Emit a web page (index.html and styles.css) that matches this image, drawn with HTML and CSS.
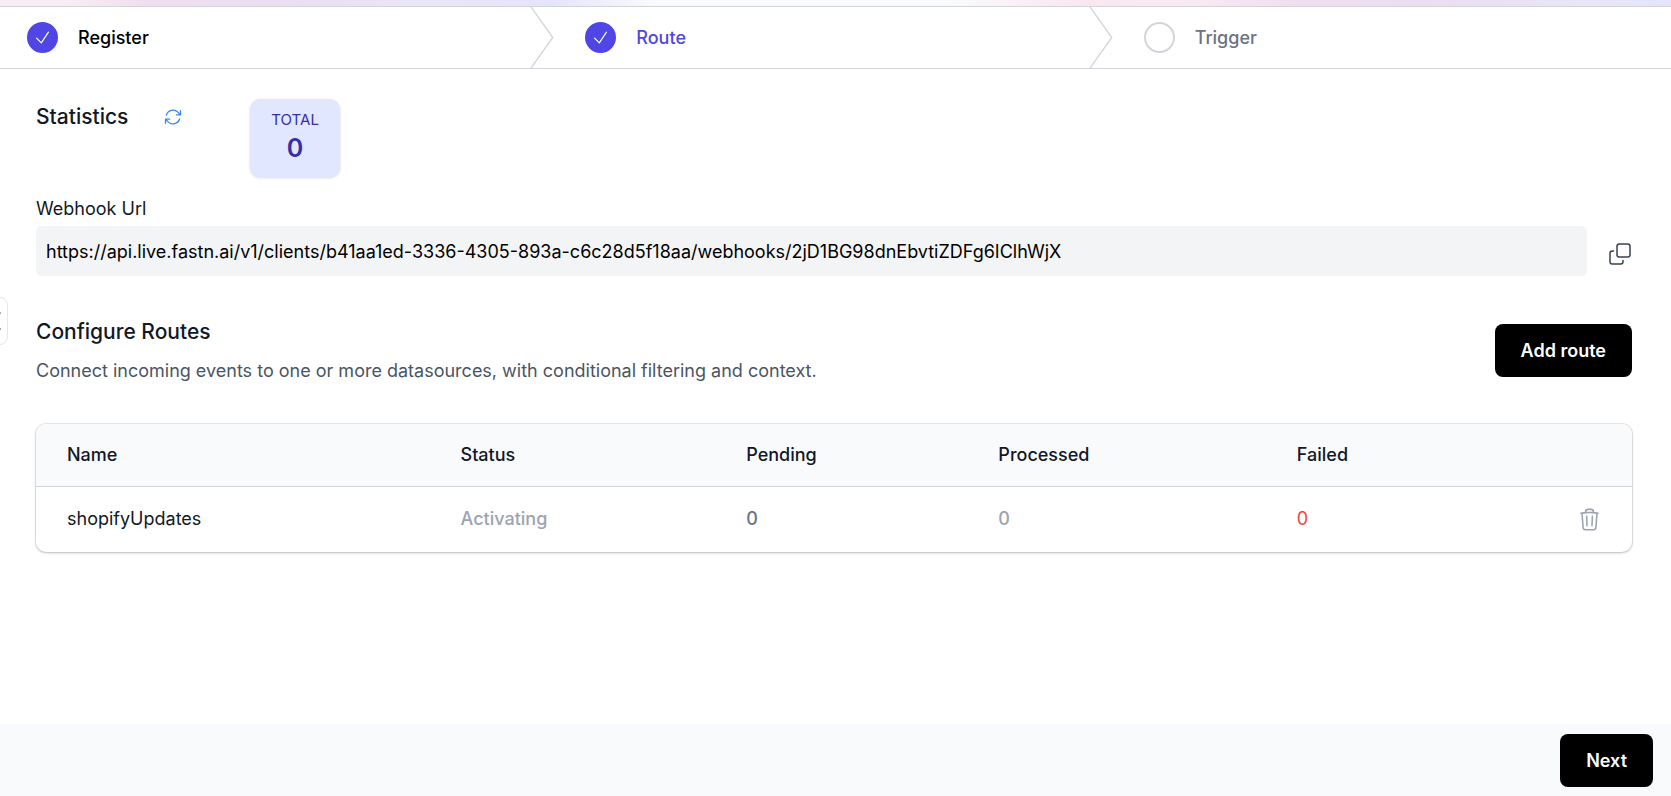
FILE: index.html
```html
<!DOCTYPE html>
<html lang="en">
<head>
<meta charset="utf-8">
<meta name="viewport" content="width=device-width, initial-scale=1">
<title>Configure Routes</title>
<link rel="stylesheet" href="styles.css">
</head>
<body>
<div class="page">
  <div class="glow"></div>
  <nav class="steps" aria-label="Progress">
    <ol class="steps-list">
      <li class="step">
        <span class="step-mark done"><svg viewBox="0 0 24 24" width="19" height="19"><path d="M4.5 12.75l6 6 9-13.5"/></svg></span>
        <span class="step-name">Register</span>
        <svg class="step-sep" viewBox="0 0 22 80" preserveAspectRatio="none"><path d="M0 -2L20 40L0 82"/></svg>
      </li>
      <li class="step current" aria-current="step">
        <span class="step-mark done"><svg viewBox="0 0 24 24" width="19" height="19"><path d="M4.5 12.75l6 6 9-13.5"/></svg></span>
        <span class="step-name">Route</span>
        <svg class="step-sep" viewBox="0 0 22 80" preserveAspectRatio="none"><path d="M0 -2L20 40L0 82"/></svg>
      </li>
      <li class="step upcoming">
        <span class="step-mark"></span>
        <span class="step-name">Trigger</span>
      </li>
    </ol>
  </nav>
  <button class="side-tab" type="button" aria-label="Expand sidebar"><svg viewBox="0 0 10 18" width="10" height="18"><path d="M9 1L1 9l8 8"/></svg></button>
  <main class="content">
    <section class="stats">
      <h2 class="heading">Statistics</h2>
      <button class="icon-button refresh" type="button" aria-label="Refresh"><svg viewBox="0 0 24 24" width="20" height="20"><path d="M16.023 9.348h4.992v-.001M2.985 19.644v-4.992m0 0h4.992m-4.993 0l3.181 3.183a8.25 8.25 0 0013.803-3.7M4.031 9.865a8.25 8.25 0 0113.803-3.7l3.181 3.182m0-4.991v4.99"/></svg></button>
      <div class="total">
        <span class="total-label">TOTAL</span>
        <span class="total-value">0</span>
      </div>
    </section>
    <label class="url-label" for="webhook-url">Webhook Url</label>
    <div class="url-row">
      <input class="url-input" id="webhook-url" type="text" readonly value="https://api.live.fastn.ai/v1/clients/b41aa1ed-3336-4305-893a-c6c28d5f18aa/webhooks/2jD1BG98dnEbvtiZDFg6IClhWjX">
      <button class="icon-button copy" type="button" aria-label="Copy webhook url"><svg viewBox="0 0 24 24" width="24" height="24"><rect x="9" y="2" width="13" height="13" rx="2.25"/><path d="M5.5 9H4.25A2.25 2.25 0 002 11.25V19.75A2.25 2.25 0 004.25 22H12.75A2.25 2.25 0 0015 19.75V18.5"/></svg></button>
    </div>
    <section class="routes-head">
      <div>
        <h2 class="heading">Configure Routes</h2>
        <p class="lead">Connect incoming events to one or more datasources, with conditional filtering and context.</p>
      </div>
      <button class="primary" type="button">Add route</button>
    </section>
    <div class="table-card">
      <table class="routes">
        <thead>
          <tr><th class="col-name" scope="col">Name</th><th class="col-status" scope="col">Status</th><th class="col-pending" scope="col">Pending</th><th class="col-processed" scope="col">Processed</th><th class="col-failed" scope="col">Failed</th><td class="col-action"></td></tr>
        </thead>
        <tbody>
          <tr>
            <td class="col-name route-name">shopifyUpdates</td>
            <td class="muted strong">Activating</td>
            <td class="count">0</td>
            <td class="muted strong">0</td>
            <td class="failed">0</td>
            <td class="col-action"><button class="icon-button trash" type="button" aria-label="Delete route"><svg viewBox="0 0 24 24" width="25" height="25"><path d="M14.74 9l-.346 9m-4.788 0L9.26 9m9.968-3.21c.342.052.682.107 1.022.166m-1.022-.165L18.16 19.673a2.25 2.25 0 01-2.244 2.077H8.084a2.25 2.25 0 01-2.244-2.077L4.772 5.79m14.456 0a48.108 48.108 0 00-3.478-.397m-12 .562c.34-.059.68-.114 1.022-.165m0 0a48.11 48.11 0 013.478-.397m7.5 0v-.916c0-1.18-.91-2.164-2.09-2.201a51.964 51.964 0 00-3.32 0c-1.18.037-2.09 1.022-2.09 2.201v.916m7.5 0a48.667 48.667 0 00-7.5 0"/></svg></button></td>
          </tr>
        </tbody>
      </table>
    </div>
  </main>
  <footer class="footer"><button class="primary" type="button">Next</button></footer>
</div>
</body>
</html>
```
FILE: styles.css
```css
*, *::before, *::after { box-sizing: border-box; }
body {
  margin: 0;
  background: #fff;
  color: #111827;
  font-family: Inter, "Liberation Sans", sans-serif;
  font-size: 18px;
  line-height: 24px;
}
h2, p, ol { margin: 0; padding: 0; font-weight: inherit; }
button, input { font: inherit; color: inherit; }
svg { display: block; fill: none; stroke: currentColor; stroke-linecap: round; stroke-linejoin: round; stroke-width: 1.5; }

.page { position: relative; display: flex; flex-direction: column; min-height: 100vh; overflow: hidden; }
.glow {
  height: 6px;
  background: linear-gradient(90deg, #f8edf3 0%, #f8edf3 4%, #f0def0 9%, #eadff3 19%, #eae6f7 25%, #e6e4fa 33%, #f8fafc 39%, #f9fafb 57%, #fae6ef 65%, #f8eaf2 71%, #f0def0 78%, #eadff3 88%, #e8e6f7 95%, #e4e4fa 100%);
}

.steps { border: solid #d1d5db; border-width: 1px 0; margin: 0 -2px; }
.steps-list { display: grid; grid-template-columns: repeat(3, 1fr); list-style: none; }
.step { position: relative; display: flex; align-items: center; gap: 20px; height: 61px; padding-left: 29px; }
.step-mark { display: grid; place-items: center; width: 31px; height: 31px; border: 2px solid #d1d5db; border-radius: 50%; }
.step-mark.done { border-color: #4f46e5; background: #4f46e5; color: #fff; }
.step-name { font-weight: 500; color: #000; }
.current .step-name { color: #4f46e5; }
.upcoming .step-name { color: #6b7280; }
.step-sep { position: absolute; top: 0; right: 1px; width: 25px; height: 100%; color: #d1d5db; }
.step-sep path { stroke-width: 1.3; vector-effect: non-scaling-stroke; }

.side-tab { position: absolute; top: 297px; left: -22px; display: flex; align-items: center; justify-content: flex-end; width: 30px; height: 48px; padding: 0 6px 0 0; border: 1px solid #e5e7eb; border-radius: 8px; background: #fff; color: #374151; }

.content { flex: 1; padding: 30px 39px 24px 36px; }
.heading { font-size: 21px; line-height: 28px; font-weight: 500; }
.icon-button { display: grid; place-items: center; padding: 0; border: 0; background: none; }

.stats { display: flex; align-items: flex-start; }
.stats .heading { padding-top: 4px; }
.refresh { margin: 8px 67px 0 35px; color: #3b82f6; }
.total { display: flex; flex-direction: column; align-items: center; height: 78px; padding: 11px 21px 9px; border-radius: 10px; background: #e0e7ff; color: #3730a3; box-shadow: 0 1px 3px rgba(0, 0, 0, 0.15); }
.total-label { font-size: 15px; line-height: 20px; }
.total-value { font-size: 25px; line-height: 36px; font-weight: 600; }

.url-label { display: block; margin-top: 20px; }
.url-row { display: flex; align-items: center; gap: 21px; margin-top: 5px; }
.url-input { flex: 1; min-width: 0; height: 50px; padding: 0 10px; border: 0; border-radius: 6px; background: #f3f4f6; color: #000; }
.copy { margin-top: 6px; color: #374151; }

.routes-head { display: flex; align-items: center; justify-content: space-between; margin-top: 42px; padding-bottom: 5px; }
.lead { margin-top: 13px; color: #4b5563; }
.primary { height: 53px; padding: 0 26px; border: 0; border-radius: 8px; background: #000; color: #fff; font-weight: 600; }

.table-card { margin-top: 36px; border-radius: 10px; overflow: hidden; box-shadow: 0 0 0 1px rgba(0, 0, 0, 0.08), 0 1px 3px rgba(0, 0, 0, 0.2); }
.routes { width: 100%; border-collapse: collapse; table-layout: fixed; }
.routes th, .routes td { padding: 0; text-align: left; }
.routes thead { background: #f9fafb; }
.routes thead tr { height: 62px; border-bottom: 1px solid #d1d5db; }
.routes tbody tr { height: 66px; }
.routes th { font-weight: 500; }
.routes .col-name { width: 26.6%; padding-left: 31px; }
.col-status { width: 17.9%; }
.col-pending { width: 15.8%; }
.col-processed { width: 18.7%; }
.col-failed { width: 14%; }
.routes .col-action { padding-right: 30px; }
.trash { margin-left: auto; color: #9ca3af; }
.muted { color: #9ca3af; }
.strong { font-weight: 500; }
.count { color: #6b7280; font-weight: 500; }
.failed { color: #ef4444; }

.footer { display: flex; justify-content: flex-end; padding: 10px 18px 9px; background: #f9fafb; }
```
